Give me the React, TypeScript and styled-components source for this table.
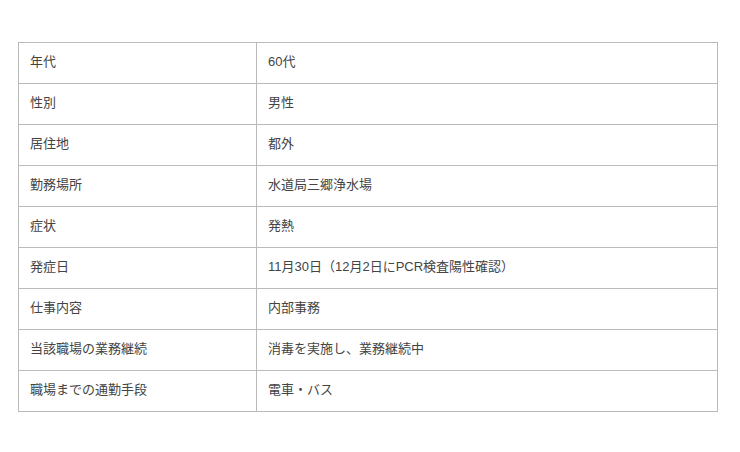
import React from "react";
import styled, { createGlobalStyle } from "styled-components";

const GlobalStyle = createGlobalStyle`
  body {
    margin: 0;
    background: #ffffff;
    font-family: "Liberation Sans", "Noto Sans CJK JP", sans-serif;
  }
`;

const PageWrapper = styled.div`
  padding: 42px 0 0 18px;
`;

const InfoTable = styled.table`
  width: 700px;
  border-collapse: collapse;
  border: 1px solid #bbbbbb;
`;

const Row = styled.tr`
  height: 41px;
`;

const Cell = styled.td<{ $head?: boolean }>`
  width: ${(p) => (p.$head ? "215px" : "auto")};
  padding: 0 11px 3px;
  border: 1px solid #bbbbbb;
  font-size: 13px;
  line-height: 1;
  color: #444444;
  vertical-align: middle;
  text-align: left;
`;

const rows: [string, string][] = [
  ["年代", "60代"],
  ["性別", "男性"],
  ["居住地", "都外"],
  ["勤務場所", "水道局三郷浄水場"],
  ["症状", "発熱"],
  ["発症日", "11月30日（12月2日にPCR検査陽性確認）"],
  ["仕事内容", "内部事務"],
  ["当該職場の業務継続", "消毒を実施し、業務継続中"],
  ["職場までの通勤手段", "電車・バス"],
];

const App: React.FC = () => {
  return (
    <PageWrapper>
      <GlobalStyle />
      <InfoTable>
        <tbody>
          {rows.map(([label, value]) => (
            <Row key={label}>
              <Cell $head>{label}</Cell>
              <Cell>{value}</Cell>
            </Row>
          ))}
        </tbody>
      </InfoTable>
    </PageWrapper>
  );
};

export default App;
